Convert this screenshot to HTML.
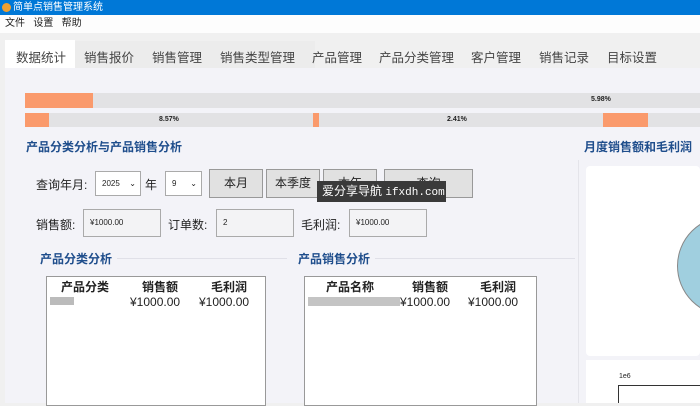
<!DOCTYPE html>
<html><head><meta charset="utf-8"><style>
*{margin:0;padding:0;box-sizing:border-box}
body{width:700px;height:403px;overflow:hidden;background:#f0f0f0;font-family:"Liberation Sans","Noto Sans CJK SC",sans-serif;position:relative;font-size:12px;color:#222}
.a{position:absolute}
.t{white-space:nowrap}
.h{color:#1f4e8c;font-weight:bold;font-size:12px}
.tab{font-size:12.5px;color:#444;top:47px}
.btn{background:#e1e1e1;border:1px solid #999;text-align:center;line-height:27px;font-size:12px}
.inp{background:#f3f3f5;border:1px solid #aaa;font-size:8px;line-height:26px;padding-left:6px}
.sel{background:#fff;border:1px solid #aaa;font-size:8px;line-height:24px;padding-left:6px}
</style></head><body>
<div class="a" style="left:0;top:0;width:700px;height:15px;background:#0078d7"></div>
<div class="a" style="left:2px;top:3px;width:9px;height:9px;border-radius:50%;background:#f0a030"></div>
<div class="a t" style="left:13px;top:0;color:#fff;font-size:10px;line-height:15px">简单点销售管理系统</div>
<div class="a" style="left:0;top:15px;width:700px;height:18px;background:#fdfdfd"></div>
<div class="a t" style="left:5px;top:16px;font-size:10px;line-height:15px">文件&nbsp;&nbsp;&nbsp;设置&nbsp;&nbsp;&nbsp;帮助</div>
<div class="a" style="left:5px;top:41px;width:310px;height:27px;background:#ececec"></div>
<div class="a" style="left:5px;top:40px;width:70px;height:28px;background:#fff"></div>
<div class="a t tab" style="left:16px">数据统计</div>
<div class="a t tab" style="left:84px">销售报价</div>
<div class="a t tab" style="left:152px">销售管理</div>
<div class="a t tab" style="left:220px">销售类型管理</div>
<div class="a t tab" style="left:312px">产品管理</div>
<div class="a t tab" style="left:379px">产品分类管理</div>
<div class="a t tab" style="left:471px">客户管理</div>
<div class="a t tab" style="left:539px">销售记录</div>
<div class="a t tab" style="left:607px">目标设置</div>
<div class="a" style="left:5px;top:68px;width:695px;height:335px;background:#f3f3f8"></div>
<div class="a" style="left:25px;top:93px;width:675px;height:15px;background:#e2e2e4"></div>
<div class="a" style="left:25px;top:93px;width:68px;height:15px;background:#fa9a6c"></div>
<div class="a t" style="left:591px;top:96px;font-size:7px;font-weight:bold">5.98%</div>
<div class="a" style="left:25px;top:113px;width:675px;height:14px;background:#e2e2e4"></div>
<div class="a" style="left:25px;top:113px;width:24px;height:14px;background:#fa9a6c"></div>
<div class="a t" style="left:159px;top:116px;font-size:7px;font-weight:bold">8.57%</div>
<div class="a" style="left:313px;top:113px;width:6px;height:14px;background:#fa9a6c"></div>
<div class="a t" style="left:447px;top:116px;font-size:7px;font-weight:bold">2.41%</div>
<div class="a" style="left:603px;top:113px;width:45px;height:14px;background:#fa9a6c"></div>
<div class="a t h" style="left:26px;top:138px">产品分类分析与产品销售分析</div>
<div class="a t h" style="left:584px;top:138px">月度销售额和毛利润</div>
<div class="a" style="left:578px;top:160px;width:1px;height:243px;background:#e4e4ea"></div>
<div class="a" style="left:586px;top:166px;width:114px;height:190px;background:#fff;border-radius:4px"></div>
<div class="a" style="left:677px;top:216px;width:100px;height:100px;border-radius:50%;background:#a0cfdf;border:1px solid #888"></div>
<div class="a" style="left:586px;top:360px;width:114px;height:43px;background:#fff"></div>
<div class="a t" style="left:619px;top:373px;font-size:7px">1e6</div>
<div class="a" style="left:618px;top:385px;width:82px;height:18px;border:1px solid #333;border-right:none;border-bottom:none"></div>
<div class="a t" style="left:36px;top:176px;font-size:12px">查询年月:</div>
<div class="a sel" style="left:95px;top:171px;width:46px;height:25px">2025<span style="position:absolute;right:4px;font-size:8px">⌄</span></div>
<div class="a t" style="left:145px;top:176px">年</div>
<div class="a sel" style="left:165px;top:171px;width:37px;height:25px">9<span style="position:absolute;right:4px;font-size:8px">⌄</span></div>
<div class="a btn" style="left:209px;top:169px;width:54px;height:29px">本月</div>
<div class="a btn" style="left:266px;top:169px;width:54px;height:29px">本季度</div>
<div class="a btn" style="left:323px;top:169px;width:54px;height:29px">本年</div>
<div class="a btn" style="left:384px;top:169px;width:89px;height:29px">查询</div>
<div class="a t" style="left:317px;top:181px;width:129px;height:21px;background:#3a3a3a;color:#fff;font-size:12px;line-height:21px;padding-left:5px">爱分享导航 <span style="font-family:'Liberation Mono',monospace;font-size:11px">ifxdh.com</span></div>
<div class="a t" style="left:36px;top:216px">销售额:</div>
<div class="a inp" style="left:83px;top:209px;width:78px;height:28px">¥1000.00</div>
<div class="a t" style="left:168px;top:216px">订单数:</div>
<div class="a inp" style="left:216px;top:209px;width:78px;height:28px">2</div>
<div class="a t" style="left:301px;top:216px">毛利润:</div>
<div class="a inp" style="left:349px;top:209px;width:78px;height:28px">¥1000.00</div>
<div class="a t h" style="left:40px;top:250px">产品分类分析</div>
<div class="a" style="left:117px;top:258px;width:170px;height:1px;background:#e0e0e8"></div>
<div class="a t h" style="left:298px;top:250px">产品销售分析</div>
<div class="a" style="left:375px;top:258px;width:200px;height:1px;background:#e0e0e8"></div>
<div class="a" style="left:46px;top:276px;width:220px;height:130px;background:#fff;border:1px solid #999"></div>
<div class="a t" style="left:61px;top:278px;font-weight:bold">产品分类</div>
<div class="a t" style="left:142px;top:278px;font-weight:bold">销售额</div>
<div class="a t" style="left:211px;top:278px;font-weight:bold">毛利润</div>
<div class="a" style="left:50px;top:297px;width:24px;height:8px;background:#bbb"></div>
<div class="a t" style="left:130px;top:295px">¥1000.00</div>
<div class="a t" style="left:199px;top:295px">¥1000.00</div>
<div class="a" style="left:304px;top:276px;width:233px;height:130px;background:#fff;border:1px solid #999"></div>
<div class="a t" style="left:326px;top:278px;font-weight:bold">产品名称</div>
<div class="a t" style="left:412px;top:278px;font-weight:bold">销售额</div>
<div class="a t" style="left:480px;top:278px;font-weight:bold">毛利润</div>
<div class="a" style="left:308px;top:297px;width:92px;height:9px;background:#c4c4c4"></div>
<div class="a t" style="left:400px;top:295px">¥1000.00</div>
<div class="a t" style="left:468px;top:295px">¥1000.00</div>
</body></html>
